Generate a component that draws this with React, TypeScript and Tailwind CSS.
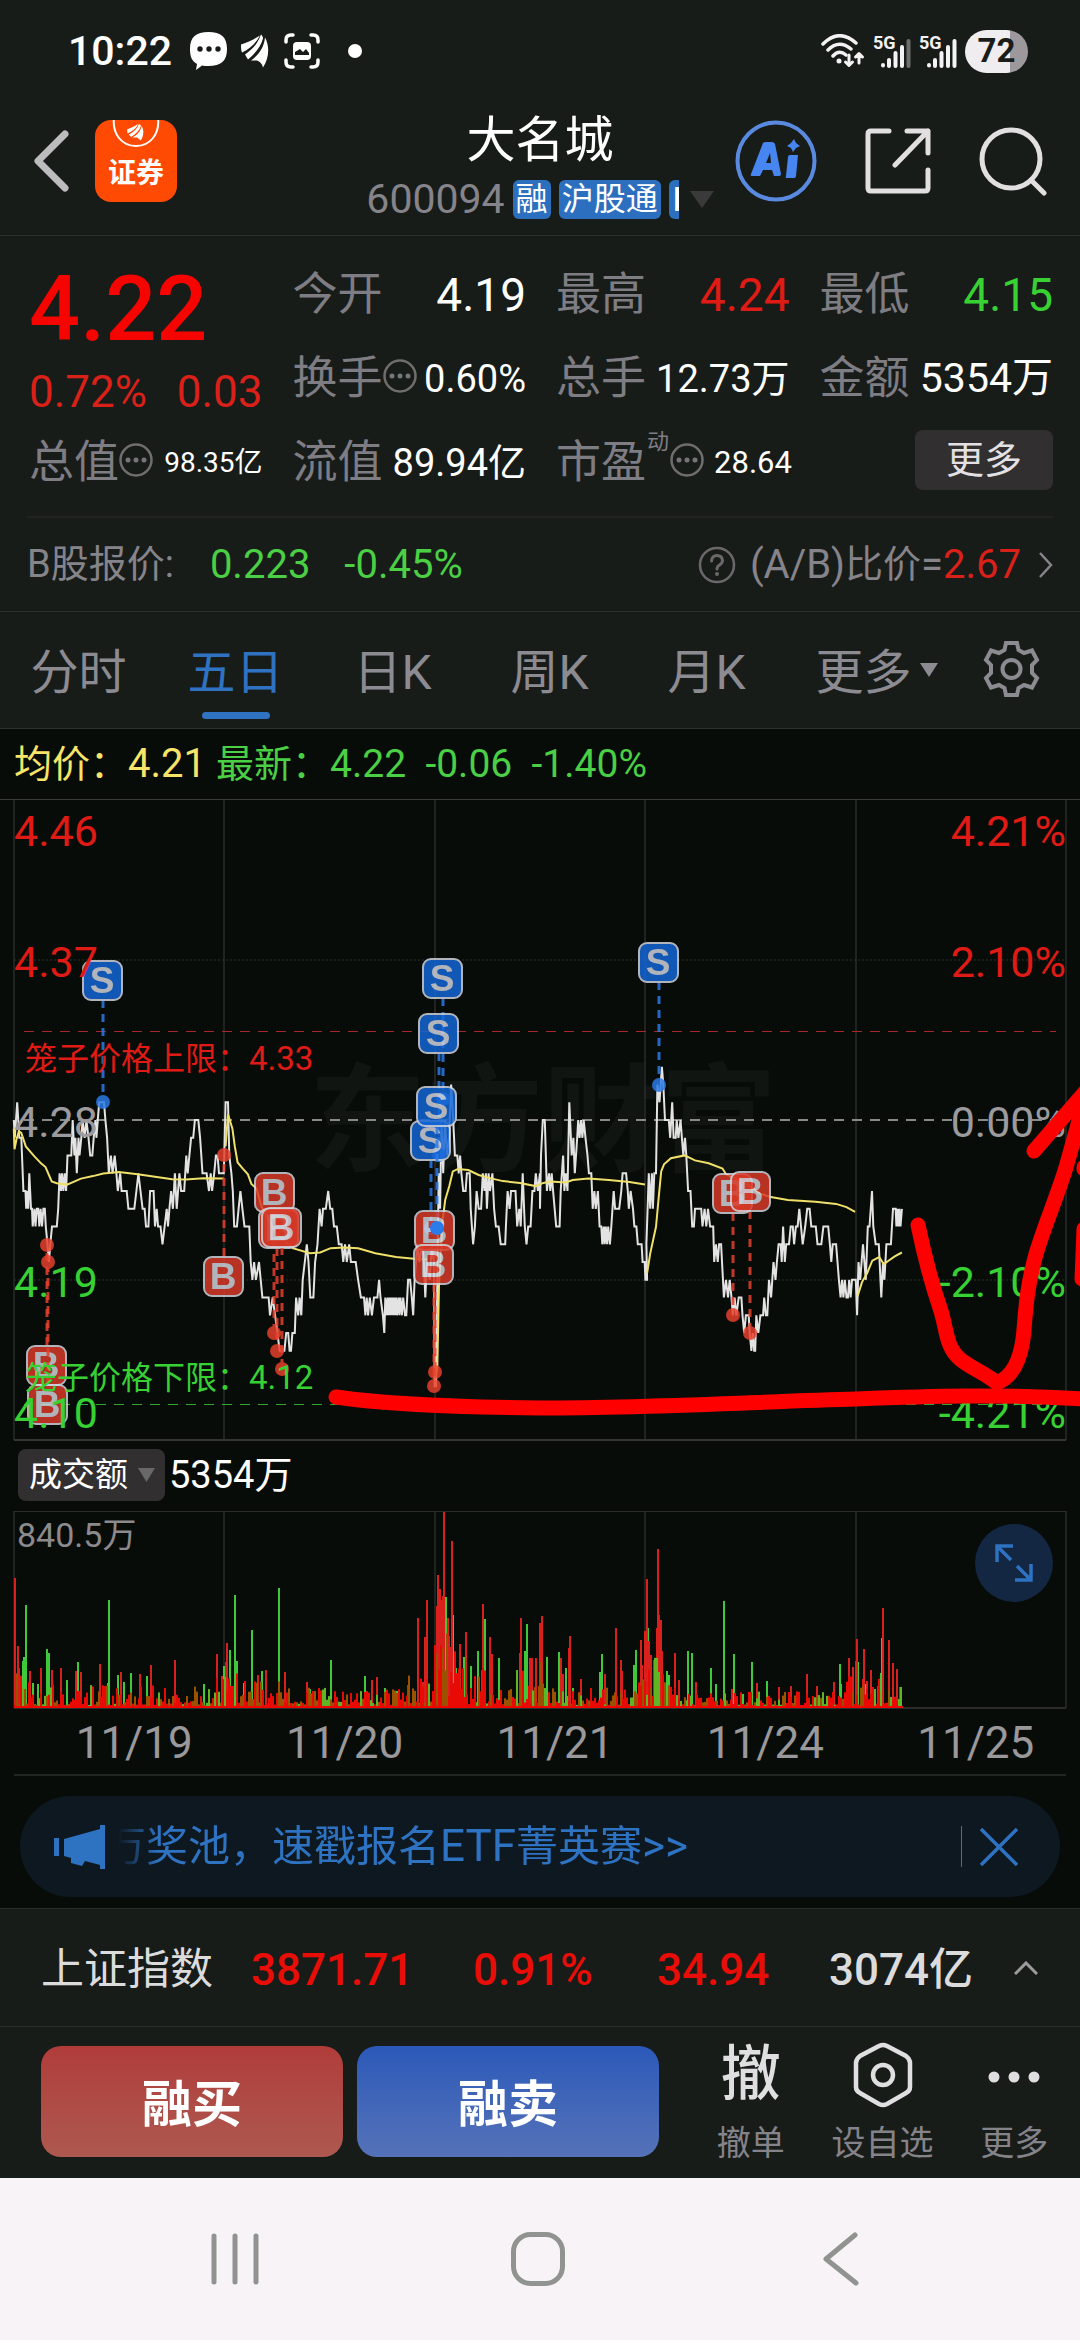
import type { ReactNode } from 'react'

type Side = 'S' | 'B'
type Point = [number, number]

const UP = '#e01a14'
const DOWN = '#37d134'

// ---- price chart -------------------------------------------------------

const CHART_LEFT = 14
const CHART_RIGHT = 1066
const SESSION_X = [14, 224, 435, 645, 856, 1066]
const TICKS_PER_PX = 2.904
const MID_Y = 321
const CENT_H = 17.75

const px = (start: number, t: number) => start + t / TICKS_PER_PX

function parse(src: string): Point[] {
  return src
    .trim()
    .split(/\s+/)
    .map((p) => p.split(',').map(Number) as Point)
}

// tick,cents above 4.00
function priceLine(start: number, src: string) {
  return parse(src)
    .map(([t, c]) => `${px(start, t).toFixed(1)},${(MID_Y + (28 - c) * CENT_H).toFixed(1)}`)
    .join(' ')
}

function avgLine(start: number, src: string) {
  return parse(src)
    .map(([t, v]) => `${px(start, t).toFixed(1)},${(101 + v / 2.8).toFixed(1)}`)
    .join(' ')
}

const PRICE_A = `40,28 43,27 50,29 56,27 62,27 68,24 74,24 76,23 79,24 82,23 85,25 90,23 93,23 95,22 100,23 103,22 107,23 111,23 114,22 118,23
122,22 126,23 130,23 133,22 138,21 142,20 146,21 151,22 165,22 169,23 173,25 177,24 180,25 184,24 188,25 192,24 196,26 207,26 211,28 216,26 219,27
223,25 228,27 231,26 236,27 240,28 246,27 251,28 257,27 262,26 268,26 272,27 277,28 280,27 284,28 288,29 302,29 306,28 311,27 316,25 322,26 327,25
333,26 338,25 342,24 349,25 353,24 368,24 373,23 390,23 396,24 402,25 408,24 414,23 420,23 424,22 431,22 436,24 446,24 450,22 455,23 459,22 466,22
472,21 478,22 484,23 488,22 492,23 497,24 502,23 508,25 513,23 521,25 526,24 535,24 541,26 545,25 550,26 555,27 561,27 566,28 576,28 581,27 588,25
600,25 607,24 612,25 616,24 622,25 627,26 632,26 636,25 650,25 655,29 662,29 666,26 672,25 676,24 680,22 688,22 693,23 698,24 704,23 710,22 724,22
728,20 733,19 738,20 743,19 752,20 757,19 762,18 780,18 784,17 792,18 799,17 806,16 812,15 826,15 831,16 837,16 841,15 845,15 849,16 856,16 860,18
866,17 870,18 875,17 879,19 885,20 891,21 896,20 901,18 910,18 915,20 922,21 928,23 934,22 938,23 946,23 953,24 959,23 965,23 970,22 978,22 984,21
992,21 997,20 1002,21 1007,20 1014,21 1019,20 1033,20 1040,19 1048,18 1057,18 1061,17 1065,18 1069,17 1074,18 1080,17 1086,18 1096,18 1101,19 1105,18
1112,17 1116,16 1119,18 1123,17 1126,18 1129,17 1132,18 1135,17 1138,18 1141,17 1144,18 1147,17 1150,18 1153,17 1157,18 1160,17 1163,18 1167,17
1171,18 1176,17 1180,17 1185,19 1191,19 1196,18 1200,17 1204,19 1212,21 1218,20 1226,21 1231,20 1235,18 1240,20 1248,19 1254,21 1260,20 1262,13
1266,13 1270,19 1274,25 1278,23 1282,28 1287,25 1292,28 1298,26 1304,27 1310,30 1316,28 1321,26 1328,26 1332,25 1336,26 1340,25 1345,24 1352,24
1356,25 1364,25 1367,23 1374,21 1379,22 1384,24 1390,23 1397,23 1402,25 1407,24 1411,25 1414,23 1419,25 1423,24 1430,25 1435,23 1440,22 1448,22
1454,21 1467,21 1469,22 1474,24 1480,23 1484,24 1497,24 1502,22 1508,23 1512,22 1518,25 1524,22 1529,21 1534,22 1541,22 1546,24 1552,24 1556,25
1562,24 1568,25`

const PRICE_B = `0,23 3,26 8,28 14,28 20,24 26,25 30,24 34,25 38,24 47,22 57,22 60,24 67,26 71,24 75,25 80,24 85,29 92,26 97,27 101,25 108,27 111,28
115,27 119,28 123,27 127,28 132,27 138,26 142,25 149,25 153,23 158,24 162,23 168,24 173,22 178,22 181,21 185,22 188,21 191,22 195,21 198,22 203,21
207,22 214,24 218,23 230,23 236,24 240,25 250,25 255,24 258,23 263,24 270,23 274,22 280,22 284,21 295,21 298,20 304,20 306,19 311,19 309,21 316,25
320,23 325,25 328,23 332,25 337,25 341,30 347,29 354,31 358,30 363,28 374,28 378,27 384,29 388,27 394,27 397,28 402,27 408,28 412,27 416,26 421,27
425,26 430,24 437,24 442,22 447,22 450,23 468,23 472,22 478,23 483,22 488,23 494,22 503,22 506,20 511,21 516,20 520,21 526,21 534,18 540,19 546,18
551,19 556,18 560,17 565,18 570,17 577,18 585,18 588,17 593,16 598,17 606,17 609,16 614,15 618,16 622,15 625,15 628,17 634,16 640,17 648,17 651,18
656,17 660,17 665,19 671,18 678,20 684,19 688,20 693,21 699,21 702,20 706,22 711,20 715,21 723,21 728,22 734,22 738,21 743,22 748,22 753,23 758,22
763,21 770,22 776,23 783,23 788,22 801,22 806,21 817,21 823,22 837,22 842,21 846,20 850,21 860,21 864,20 868,19 873,18 877,19 881,18 885,19 890,18
894,18 898,19 902,18 906,19 917,19 921,17 925,20 930,19 934,20 938,21 942,20 946,19 952,22 957,22 964,24 968,22 975,21 984,21 991,18 996,20 1000,19
1006,21 1019,21 1025,23 1033,23 1035,22 1038,23 1041,22 1044,23 1047,22 1051,23`

const AVERAGES = [
  avgLine(0, '40,640 42,698 48,670 55,648 62,652 75,690 100,718 120,738 132,748 150,788 165,793 195,797 235,780 270,773 300,766 345,762 400,768 450,775 500,782 540,783 590,779 650,780'),
  avgLine(0, '655,690 662,600 675,640 682,690 690,735 705,752 720,768 730,795 745,808 760,860 800,930 850,975 900,989 930,987 960,975 1000,973 1040,975 1090,989 1150,1000 1210,1005 1240,1006'),
  avgLine(0, '1263,1350 1270,1310 1275,1080 1285,900 1293,840 1305,800 1315,760 1330,753 1360,756 1390,770 1420,778 1460,787 1510,792 1555,801 1578,792 1598,788 1643,791 1663,784 1708,780 1768,784 1828,790 1873,797'),
  avgLine(540, '311,1045 320,990 337,915 345,830 352,760 360,740 380,723 420,715 450,729 490,737 530,752 540,768 590,790 640,822 670,832 720,840 800,845 860,851 890,860 915,873'),
  avgLine(540, '922,1110 935,1070 950,1045 965,1010 985,1000 992,1010 998,1020 1012,1010 1030,998 1051,987'),
]

// badge centre, then the traded point that it belongs to
const TRADES: { side: Side; x: number; y: number; dot: Point }[] = [
  { side: 'S', x: 102, y: 181, dot: [103, 303] },
  { side: 'B', x: 46, y: 566, dot: [47, 446] },
  { side: 'B', x: 47, y: 605, dot: [48, 463] },
  { side: 'B', x: 223, y: 477, dot: [224, 356] },
  { side: 'B', x: 274, y: 393, dot: [274, 534] },
  { side: 'B', x: 278, y: 429, dot: [277, 552] },
  { side: 'B', x: 281, y: 428, dot: [282, 570] },
  { side: 'S', x: 442, y: 179, dot: [443, 300] },
  { side: 'S', x: 438, y: 234, dot: [439, 356] },
  { side: 'S', x: 430, y: 341, dot: [431, 429] },
  { side: 'S', x: 436, y: 307, dot: [437, 429] },
  { side: 'B', x: 434, y: 431, dot: [435, 573] },
  { side: 'B', x: 433, y: 465, dot: [434, 587] },
  { side: 'S', x: 658, y: 163, dot: [659, 286] },
  { side: 'B', x: 732, y: 394, dot: [733, 516] },
  { side: 'B', x: 750, y: 392, dot: [750, 534] },
]

const LEFT_LABELS = [
  { y: 47, text: '4.46', color: UP },
  { y: 178, text: '4.37', color: UP },
  { y: 338, text: '4.28', color: '#9c9a9d' },
  { y: 498, text: '4.19', color: DOWN },
  { y: 629, text: '4.10', color: DOWN },
]

const RIGHT_LABELS = [
  { y: 47, text: '4.21%', color: UP },
  { y: 178, text: '2.10%', color: UP },
  { y: 338, text: '0.00%', color: '#9c9a9d' },
  { y: 498, text: '-2.10%', color: DOWN },
  { y: 629, text: '-4.21%', color: DOWN },
]

function Trade({ side, x, y, dot }: (typeof TRADES)[number]) {
  const main = side === 'S' ? '#2b7be8' : '#e8402c'
  const from = dot[1] > y ? y + 20 : y - 20
  return (
    <g opacity="0.84">
      <line x1={dot[0]} y1={from} x2={dot[0]} y2={dot[1]} stroke={main} strokeWidth="3" strokeDasharray="8 6" />
      <circle cx={dot[0]} cy={dot[1]} r="7" fill={main} />
      <rect x={x - 19} y={y - 19} width="39" height="39" rx="8" fill={side === 'S' ? '#1466d6' : '#d93a28'} stroke="#d3d5de" strokeWidth="2" />
      <text x={x} y={y + 13} textAnchor="middle" fontSize="37" fontWeight="700" fill="#d3d5de" fontFamily="Liberation Sans, Arial, sans-serif">
        {side}
      </text>
    </g>
  )
}

function PriceChart() {
  return (
    <svg viewBox="0 0 1080 642" className="block h-auto w-full" role="img" aria-label="五日走势">
      <text x="543" y="363" textAnchor="middle" fontSize="117" fontWeight="700" fill="#101511">
        东方财富
      </text>
      {SESSION_X.map((x) => (
        <line key={x} x1={x} y1="1" x2={x} y2="641" stroke="#393a3a" />
      ))}
      <line x1="0" y1="0.5" x2="1080" y2="0.5" stroke="#3a3a3a" />
      <line x1={CHART_LEFT} y1="641" x2={CHART_RIGHT} y2="641" stroke="#343434" strokeWidth="2" />
      {[161, 481].map((y) => (
        <line key={y} x1={CHART_LEFT} y1={y} x2={CHART_RIGHT} y2={y} stroke="#2c302d" strokeDasharray="2 2" />
      ))}
      <line x1="24" y1="232.5" x2="1056" y2="232.5" stroke="#a32a2a" strokeDasharray="10 8" />
      <line x1="24" y1="605.5" x2="1056" y2="605.5" stroke="#2fa930" strokeDasharray="10 8" />
      <line x1="24" y1="321" x2="1056" y2="321" stroke="#8a888b" strokeWidth="2" strokeDasharray="10 8" />

      <polyline points={priceLine(0, PRICE_A) + ' ' + priceLine(540, PRICE_B)} fill="none" stroke="#e4e3e4" strokeWidth="2" />
      {AVERAGES.map((points) => (
        <polyline key={points} points={points} fill="none" stroke="#efe069" strokeWidth="2" />
      ))}
      {TRADES.map((t) => (
        <Trade key={`${t.x}-${t.y}`} {...t} />
      ))}
      <circle cx="437" cy="429" r="7" fill="#2b7be8" />

      <g fontSize="43">
        {LEFT_LABELS.map((l) => (
          <text key={l.text} x="14" y={l.y} fill={l.color}>
            {l.text}
          </text>
        ))}
        {RIGHT_LABELS.map((l) => (
          <text key={l.text} x="1066" y={l.y} fill={l.color} textAnchor="end">
            {l.text}
          </text>
        ))}
      </g>
      <text x="25" y="271" fontSize="32" fill={UP}>
        笼子价格上限：<tspan fontSize="33">4.33</tspan>
      </text>
      <text x="25" y="590" fontSize="32" fill={DOWN}>
        笼子价格下限：<tspan fontSize="33">4.12</tspan>
      </text>

      {/* hand drawn marks */}
      <g fill="none" stroke="#ff0000" strokeWidth="15" strokeLinecap="round" strokeLinejoin="round">
        <path d="M336 598C370 603 440 608 540 609C660 609 770 602 856 600C930 597 1000 595 1085 600" />
        <path d="M918 426C925 460 930 480 941 512C947 532 946 548 960 560C972 570 984 573 997 584C1012 578 1020 562 1023 540C1026 515 1025 495 1036 455C1045 425 1060 390 1067 365C1074 340 1078 325 1085 300" />
        <path d="M1034 352L1086 292" />
        <path d="M1084 370V368" />
        <path d="M1084 430L1082 480" />
      </g>
    </svg>
  )
}

// ---- volume chart ------------------------------------------------------

const VOL_H = 197

// x,height of the tall bars
const VOL_UP = parse(`14,130 14,65 17,62 18,40 29,37 40,40 51,38 60,40 75,37 80,36 99,44 120,36 139,34 150,43 174,48 216,54 226,65 221,32
225,46 257,33 265,38 284,36 306,26 376,31 371,28 407,23 417,90 426,108 424,71 422,26 434,62 436,102 437,133 439,119 441,108 443,196 442,112 447,90
448,72 451,167 449,61 459,64 465,76 482,104 481,38 489,71 491,54 519,55 520,90 529,50 531,50 535,50 541,92 539,85 540,84 560,50 562,34 569,72 568,60
580,29 604,34 615,80 620,48 621,37 640,68 641,43 646,129 644,77 648,67 650,53 657,159 656,80 658,93 660,88 661,57 653,48 674,55 678,28 695,26 731,19
756,25 778,21 790,22 806,34 816,22 833,26 848,50 852,41 856,69 855,47 863,59 862,29 870,38 866,27 882,100 888,68 892,45 896,39 899,21 877,22`)
const VOL_DOWN = parse(`25,103 23,51 22,47 46,59 48,55 32,25 37,24 77,46 66,28 108,108 107,25 117,33 123,26 130,35 146,32 203,24 234,113 236,47 223,42 229,58
243,25 251,78 261,37 278,120 330,48 364,32 309,19 384,20 396,17 445,111 444,73 452,93 455,40 463,51 470,42 477,57 484,89 498,50 524,57 526,84 530,49 546,51
558,56 565,40 572,20 599,36 601,54 635,58 633,43 647,80 654,40 658,64 666,37 668,33 687,57 691,55 710,40 715,24 723,107 733,54 751,46 766,27 742,14
839,44 840,24 857,46 881,70 880,35 865,24 900,18 874,19`)

function envelope(x: number) {
  if (x < 26) return 40
  if (x < 60) return 26
  if (x < 215) return 20
  if (x < 245) return 38
  if (x < 290) return 24
  if (x < 405) return 18
  if (x < 432) return 32
  if (x < 460) return 74
  if (x < 495) return 38
  if (x < 515) return 18
  if (x < 550) return 46
  if (x < 625) return 18
  if (x < 645) return 26
  if (x < 664) return 50
  if (x < 680) return 24
  if (x < 845) return 14
  if (x < 884) return 32
  return 22
}

function minuteBars() {
  const bars: { x: number; h: number; color: string }[] = []
  let seed = 17
  const next = () => {
    seed = (seed * 16807) % 2147483647
    return seed / 2147483647
  }
  for (let x = 14; x < 902; x += 2) {
    const h = 3 + envelope(x) * Math.pow(next(), 1.4)
    const kind = next()
    bars.push({ x, h, color: kind < 0.58 ? '#e80a05' : kind < 0.84 ? '#9a5200' : '#5fb524' })
  }
  return bars
}

function VolumeChart() {
  return (
    <svg viewBox="0 0 1080 198" className="block h-auto w-full" role="img" aria-label="成交额">
      {SESSION_X.map((x) => (
        <line key={x} x1={x} y1="0" x2={x} y2={VOL_H} stroke="#393a3a" />
      ))}
      <line x1={CHART_LEFT} y1="0.5" x2={CHART_RIGHT} y2="0.5" stroke="#2b2b2b" />
      <line x1={CHART_LEFT} y1={VOL_H} x2={CHART_RIGHT} y2={VOL_H} stroke="#2b2b2b" strokeWidth="2" />
      {VOL_DOWN.map(([x, h], i) => (
        <rect key={i} x={x} y={VOL_H - h} width="2" height={h} fill="#3fc93a" />
      ))}
      {VOL_UP.map(([x, h], i) => (
        <rect key={i} x={x} y={VOL_H - h} width="2" height={h} fill="#d8211c" />
      ))}
      {minuteBars().map((b) => (
        <rect key={b.x} x={b.x} y={VOL_H - b.h} width="2" height={b.h} fill={b.color} />
      ))}
      <rect x="14" y={VOL_H - 2} width="889" height="2" fill="#f00500" />
      <text x="17" y="36" fontSize="34" fill="#8c8a8d">
        840.5万
      </text>
    </svg>
  )
}

// ---- small icons -------------------------------------------------------

function Leaf({ className }: { className: string }) {
  return (
    <svg viewBox="0 0 28 33" className={className} fill="currentColor" aria-hidden="true">
      <path d="M0 10C6 8 13 5 19 1C15 8 10 14 1 18C0 16 0 13 0 10Z" />
      <path d="M20 0C21 1 22 2 22 4C20 12 14 19 7 25L4 20C12 15 17 8 20 0Z" />
      <path d="M24 3C29 12 28 24 22 33C21 29 19 27 16 26C14 26 12 26 10 26C18 20 23 13 24 3Z" />
    </svg>
  )
}

function MoreDots() {
  return (
    <svg viewBox="0 0 34 34" className="mb-[6px] size-[34px] shrink-0" aria-hidden="true">
      <circle cx="17" cy="17" r="15.5" fill="none" stroke="#6f6d6e" strokeWidth="2.5" />
      <g fill="#77757a">
        <circle cx="9" cy="17" r="2.5" />
        <circle cx="17" cy="17" r="2.5" />
        <circle cx="25" cy="17" r="2.5" />
      </g>
    </svg>
  )
}

function Signal({ full }: { full: boolean }) {
  return (
    <svg viewBox="0 0 38 38" className="h-[38px] w-[38px]" aria-hidden="true">
      <text x="0" y="17" fontSize="18" fontWeight="700" fill="#f2f0f2">
        5G
      </text>
      <g stroke="#f4f2f4" strokeWidth="4" strokeLinecap="round">
        <path d="M10 33V33.5M16 28V34M22.500 21V34M29 15V34" />
        <path d="M35.500 9V34" stroke={full ? '#f4f2f4' : '#6d6f6d'} />
      </g>
    </svg>
  )
}

// ---- sections ----------------------------------------------------------

function StatusBar() {
  return (
    <div className="flex h-[102px] items-center pr-[52px] pl-[68px] text-white">
      <span className="text-[41px] leading-[48px] font-medium">10:22</span>
      <svg viewBox="0 0 37 38" className="ml-[18px] h-[38px] w-[37px]" aria-hidden="true">
        <path d="M18.500 0C31 0 37 5 37 17S31 34 18.500 34C16 34 14 34 12 33.500L6 38L7 32C2 29 0 25 0 17C0 5 6 0 18.500 0Z" fill="#fff" />
        <g fill="#181c19">
          <circle cx="10" cy="17" r="2.700" />
          <circle cx="19" cy="17" r="2.700" />
          <circle cx="28" cy="17" r="2.700" />
        </g>
      </svg>
      <Leaf className="ml-[14px] h-[34px] w-7" />
      <svg viewBox="0 0 36 36" className="ml-[15px] size-9" aria-hidden="true">
        <path d="M2 9V7Q2 2 7 2H9M27 2H29Q34 2 34 7V9M34 27V29Q34 34 29 34H27M9 34H7Q2 34 2 29V27" fill="none" stroke="#fff" strokeWidth="3.500" strokeLinecap="round" />
        <rect x="9" y="9" width="18" height="18" rx="4" fill="#fff" />
        <path d="M11 22V19L16 16L19 19L22 16L25 20V22Z" fill="#181c19" />
      </svg>
      <span className="ml-7 size-[14px] rounded-full bg-white" />

      <div className="ml-auto flex items-center gap-2">
        <svg viewBox="0 0 44 34" className="h-[34px] w-11" fill="none" stroke="#f4f2f4" strokeLinecap="round" aria-hidden="true">
          <path d="M2 10Q18 -6 35 9M7 16Q18 5 30 15M12 22Q18 15 25 21" strokeWidth="3.500" />
          <circle cx="18" cy="27" r="2.500" fill="#f4f2f4" stroke="none" />
          <path d="M28 21V31M24.500 28L28 31.500L31.500 28M38 29V20M34.500 23L38 19.500L41.500 23" strokeWidth="3" strokeLinejoin="round" />
        </svg>
        <Signal full={false} />
        <Signal full />
        <span className="flex h-[43px] w-[63px] items-center justify-center rounded-full bg-linear-to-r from-[#efedef] from-72% to-[#9c989c] to-72% text-[33px] font-bold text-[#1a1c1a]">
          72
        </span>
      </div>
    </div>
  )
}

function Tag({ children }: { children: ReactNode }) {
  return <span className="h-[39px] shrink-0 rounded-md bg-[#2d6fbf] px-[3px] text-[32px] leading-[39px] text-white">{children}</span>
}

function Header() {
  return (
    <header className="grid h-[134px] grid-cols-[1fr_auto_1fr] items-center border-b border-[#2e302f] pb-4">
      <div className="flex items-center gap-6 pl-[33px]">
        <button aria-label="返回">
          <svg viewBox="0 0 38 64" className="h-16 w-[38px]" fill="none" stroke="#bcbbbd" strokeWidth="7" strokeLinecap="round" strokeLinejoin="round">
            <path d="M32 5L5 32L32 59" />
          </svg>
        </button>
        <a href="#securities" aria-label="证券" className="flex h-[82px] w-[82px] flex-col items-center overflow-hidden rounded-2xl bg-[#ff4a04] text-white">
          <svg viewBox="0 0 48 36" className="h-9 w-12" aria-hidden="true">
            <path d="M2 -2C0 14 10 26 24 26S48 14 46 -2" fill="none" stroke="#fff" strokeWidth="2" />
            <g transform="translate(15 4) scale(0.600 0.500)" fill="#fff">
              <path d="M0 11C6 8 13 4 19 0C16 8 10 14 1 19Z" />
              <path d="M20 0C22 1 23 2 23 4C21 13 15 19 7 26L3 21C12 16 17 9 20 0Z" />
              <path d="M24 4C29 12 28 24 23 33L17 27H9C18 21 23 14 24 4Z" />
            </g>
          </svg>
          <span className="pt-[2px] text-[28px] leading-8 font-bold">证券</span>
        </a>
      </div>

      <div className="flex flex-col items-center pt-[8px]">
        <h1 className="text-[49px] leading-[60px] text-white">大名城</h1>
        <button className="mt-[9px] flex items-center gap-[8px]">
          <span className="text-[41px] leading-[39px] text-[#86848b]">600094</span>
          <Tag>融</Tag>
          <Tag>沪股通</Tag>
          {/* the tag list is clipped after this one */}
          <span className="h-[39px] w-[10px] overflow-hidden rounded-l-md bg-[#2d6fbf] pl-1 text-left text-[34px] leading-[39px] font-medium text-white">L</span>
          <svg viewBox="0 0 24 17" className="ml-[3px] h-[17px] w-6" fill="#3a3a3b" aria-hidden="true">
            <path d="M0 0H24L12 17Z" />
          </svg>
        </button>
      </div>

      <div className="flex items-center justify-end gap-12 pr-[33px]">
        <button aria-label="Ai">
          <svg viewBox="0 0 82 82" className="size-[82px]">
            <circle cx="41" cy="41" r="38.500" fill="none" stroke="#5a8ae0" strokeWidth="4" />
            <g fill="#4785f0">
              <path fillRule="evenodd" d="M28 23Q29 22 31 22H37Q39 22 40 24L46 54Q46 56 44 56H39L37 50H28L25 56H17Q15 56 16 54ZM31 43H36L35 33Z" />
              <path d="M55 35H63L61 56Q61 58 59 58H52Q50 58 51 56L53 37Q53 35 55 35Z" />
              <path d="M59 19L61 23L65 26L61 28L58 32L56 28L52 26L56 23Z" />
            </g>
          </svg>
        </button>
        <button aria-label="分享">
          <svg viewBox="0 0 66 68" className="h-[68px] w-[66px]" fill="none" stroke="#e2dfe1" strokeWidth="5" strokeLinecap="round" strokeLinejoin="round">
            <path d="M24 4H6Q3 4 3 7V61Q3 64 6 64H60Q63 64 63 61V43" />
            <path d="M42 4H63V26M63 4L30 38" />
          </svg>
        </button>
        <button aria-label="搜索">
          <svg viewBox="0 0 68 70" className="h-[70px] w-[68px]" fill="none" stroke="#e2dfe1" strokeWidth="5" strokeLinecap="round">
            <circle cx="32" cy="33" r="29" />
            <path d="M52 54L65 67" />
          </svg>
        </button>
      </div>
    </header>
  )
}

function Stat({ label, sup, more, children }: { label: string; sup?: string; more?: boolean; children: ReactNode }) {
  return (
    <div className="flex items-center whitespace-nowrap">
      <dt className="flex h-full items-center text-[45px] leading-[52px] text-[#7f7d84]">
        {label}
        {sup && <span className="mt-[10px] self-start px-px text-[22px] leading-[22px]">{sup}</span>}
        {more && <MoreDots />}
      </dt>
      {children}
    </div>
  )
}

function Quote() {
  return (
    <section>
      <dl className="grid auto-rows-[84px] grid-cols-4 gap-x-[30px] pt-[17px] pr-[27px] pb-[11px] pl-[29px]">
        <div className="row-span-2 flex flex-col pt-[11px]">
          <dd className="text-[90px] leading-[92px] font-medium text-[#f50400]">4.22</dd>
          <dd className="mt-[11px] flex justify-between text-[44px] leading-[50px] text-[#d92019]">
            <span>0.72%</span>
            <span>0.03</span>
          </dd>
        </div>
        <Stat label="今开">
          <dd className="ml-auto text-[46px] text-white">4.19</dd>
        </Stat>
        <Stat label="最高">
          <dd className="ml-auto text-[46px] text-[#e01a14]">4.24</dd>
        </Stat>
        <Stat label="最低">
          <dd className="ml-auto text-[46px] text-[#37d134]">4.15</dd>
        </Stat>
        <Stat label="换手" more>
          <dd className="ml-auto text-[38px] text-white">0.60%</dd>
        </Stat>
        <Stat label="总手">
          <dd className="ml-auto text-[38px] text-white">12.73万</dd>
        </Stat>
        <Stat label="金额">
          <dd className="ml-auto text-[41px] text-white">5354万</dd>
        </Stat>
        <Stat label="总值" more>
          <dd className="ml-auto text-[28px] text-white">98.35亿</dd>
        </Stat>
        <Stat label="流值">
          <dd className="ml-auto text-[38px] text-white">89.94亿</dd>
        </Stat>
        <Stat label="市盈" sup="动" more>
          <dd className="ml-[10px] text-[31px] text-white">28.64</dd>
        </Stat>
        <div className="flex items-start justify-end pt-[9px]">
          <button className="h-[60px] w-[138px] rounded-lg bg-[#322f31] text-[38px] leading-[60px] text-[#e3e1e3]">更多</button>
        </div>
      </dl>

      <div className="mx-[27px] border-t-2 border-[#212321]" />

      <div className="flex h-[93px] items-center px-[27px] text-[38px] text-[#86848b]">
        <span>B股报价:</span>
        <span className="ml-9 text-[40px] text-[#4bcf45]">0.223</span>
        <span className="ml-[34px] text-[40px] text-[#4bcf45]">-0.45%</span>
        <a href="#ab" className="ml-auto flex items-center text-[40px]">
          <svg viewBox="0 0 38 38" className="mr-[14px] size-[38px]" fill="none" stroke="#6a686a" strokeWidth="2.500" strokeLinecap="round" aria-hidden="true">
            <circle cx="19" cy="19" r="17" />
            <path d="M13.500 15Q14 9.500 19 9.500T24.500 14.500Q24.500 17 21.500 19Q19 20.500 19 23" strokeWidth="3" />
            <circle cx="19" cy="28" r="2" fill="#6a686a" stroke="none" />
          </svg>
          (A/B)<span className="text-[38px]">比价</span>=<span className="text-[#d92019]">2.67</span>
          <svg viewBox="0 0 14 26" className="ml-[18px] h-[26px] w-[14px]" fill="none" stroke="#86848b" strokeWidth="2.500" aria-hidden="true">
            <path d="M1 1L12 13L1 25" />
          </svg>
        </a>
      </div>
    </section>
  )
}

const TABS = ['分时', '五日', '日K', '周K', '月K']

function Tabs() {
  return (
    <nav className="grid h-[118px] grid-cols-[repeat(6,157fr)_138fr] border-y border-[#2e302f] text-[48px] text-[#8d8b92]">
      {TABS.map((tab) => (
        <button key={tab} className={tab === '五日' ? 'flex flex-col items-center pt-[33px] text-[#2f72c1]' : 'flex flex-col items-center pt-[33px]'}>
          <span className="leading-[56px]">{tab}</span>
          {tab === '五日' && <span className="mt-[11px] h-[7px] w-[68px] rounded-full bg-[#2f72c1]" />}
        </button>
      ))}
      <button className="flex items-start justify-center pt-[33px]">
        <span className="leading-[56px]">更多</span>
        <svg viewBox="0 0 18 14" className="mt-[18px] -mr-[26px] ml-2 h-[14px] w-[18px]" fill="currentColor" aria-hidden="true">
          <path d="M0 0H18L9 14Z" />
        </svg>
      </button>
      <button aria-label="设置" className="flex items-start justify-center pt-[28px]">
        <svg viewBox="0 0 57 58" className="h-[58px] w-[57px]" fill="none" stroke="#8d8b92" strokeWidth="4">
          <path d="M23 3H34L35.500 10L41 13L49 10.500L54 20L49 25V33L54 38L49 47.500L41 45L35.500 48L34 55H23L21.500 48L16 45L8 47.500L3 38L8 33V25L3 20L8 10.500L16 13L21.500 10Z" />
          <circle cx="28.500" cy="29" r="9" />
        </svg>
      </button>
    </nav>
  )
}

const DATES = ['11/19', '11/20', '11/21', '11/24', '11/25']

function Charts() {
  return (
    <section className="bg-[#070c08]">
      <p className="flex h-[70px] items-center pl-[14px] text-[38px] whitespace-pre">
        <span className="text-[#f8e468]">
          均价：<span className="text-[40px]">4.21</span>
        </span>
        <span className="ml-[10px] text-[#4bcf45]">
          最新：<span className="text-[39px]">4.22  -0.06  -1.40%</span>
        </span>
      </p>
      <PriceChart />
      <div className="flex h-[70px] items-center pb-[3px] pl-[18px]">
        <button className="flex h-[52px] items-center gap-[10px] rounded-lg bg-[#322f31] pr-[10px] pl-[11px] text-[33px] leading-[50px] text-white">
          成交额
          <svg viewBox="0 0 17 14" className="h-[14px] w-[17px]" fill="#676867" aria-hidden="true">
            <path d="M0 0H17L8.500 14Z" />
          </svg>
        </button>
        <span className="ml-1 pt-[2px] text-[38px] text-white">5354万</span>
      </div>
      <div className="relative">
        <VolumeChart />
        <button aria-label="全屏" className="absolute top-[13px] right-[27px] rounded-full bg-[#132743] p-5">
          <svg viewBox="0 0 38 38" className="size-[38px]" fill="none" stroke="#2e72c2" strokeWidth="3.500">
            <path d="M18 2H2V18M2 2L16 16M20 36H36V20M36 36L22 22" />
          </svg>
        </button>
      </div>
      <div className="mx-[14px] grid h-[67px] grid-cols-5 border-b-2 border-[#222622] pt-[3px] text-center text-[44px] leading-[62px] text-[#9a989b]">
        {DATES.map((d) => (
          <span key={d} className="pl-[30px]">
            {d}
          </span>
        ))}
      </div>

      <div className="px-5 pt-[20px] pb-[11px]">
        <div className="flex h-[101px] items-center rounded-full bg-[#0e1820] pr-[42px] pl-[34px] text-[#2e72c2]">
          <svg viewBox="0 0 51 44" className="h-11 w-[51px]" fill="currentColor" aria-hidden="true">
            <path d="M0 13H5V31H0ZM10 14L46 4V0H51V44H46V40L31 36L28 41L17 38V33L10 31Z" />
          </svg>
          <a
            href="#etf"
            className="-ml-px text-[42px] leading-[60px] whitespace-nowrap [mask-image:linear-gradient(to_right,transparent_14px,black_54px)]"
          >
            万奖池，速戳报名<span className="text-[44px]">ETF</span>菁英赛<span className="text-[44px]">&gt;&gt;</span>
          </a>
          <span className="ml-auto h-[41px] w-px bg-[#2e72c2]" />
          <button aria-label="关闭" className="ml-[18px]">
            <svg viewBox="0 0 38 38" className="size-[38px]" fill="none" stroke="#2e72c2" strokeWidth="3.500">
              <path d="M1 1L37 37M37 1L1 37" />
            </svg>
          </button>
        </div>
      </div>
    </section>
  )
}

function IndexRow() {
  return (
    <div className="grid h-[119px] grid-cols-[210fr_222fr_184fr_172fr_185fr_66fr] items-center border-y border-[#2a2e2b] pt-[4px] pl-[41px] text-[44px] font-medium whitespace-nowrap text-[#e80d07]">
      <span className="text-[43px] font-normal text-[#dcdcdd]">上证指数</span>
      <span>3871.71</span>
      <span>0.91%</span>
      <span>34.94</span>
      <span className="text-[#dcdcdd]">3074亿</span>
      <button aria-label="展开">
        <svg viewBox="0 0 24 14" className="mb-1 h-[14px] w-6" fill="none" stroke="#9c9b9d" strokeWidth="3">
          <path d="M1 13L12 2L23 13" />
        </svg>
      </button>
    </div>
  )
}

function Action({ label, children }: { label: string; children: ReactNode }) {
  return (
    <button className="flex flex-1 flex-col items-center">
      <span className="flex h-[70px] items-center text-[60px] leading-[74px] font-medium text-[#dfdee0]">{children}</span>
      <span className="mt-[11px] text-[34px] leading-[44px] text-[#85838a]">{label}</span>
    </button>
  )
}

function TradeBar() {
  return (
    <div className="flex h-[151px] items-start pt-[13px] pl-[41px]">
      <div className="flex flex-[618] gap-[14px] pt-[6px] text-[50px] font-bold text-white">
        <button className="h-[111px] flex-1 rounded-[20px] bg-linear-to-b from-[#b03c3a] to-[#ad5850] pt-2">融买</button>
        <button className="h-[111px] flex-1 rounded-[20px] bg-linear-to-b from-[#2b59b9] to-[#5572b8] pt-2">融卖</button>
      </div>
      <div className="ml-[26px] flex flex-[395]">
        <Action label="撤单">撤</Action>
        <Action label="设自选">
          <svg viewBox="0 0 60 66" className="h-[66px] w-[60px]" fill="none" stroke="#dfdee0" strokeWidth="4.500" aria-hidden="true">
            <path d="M26 4Q30 2 34 4L53 14Q57 17 57 21V45Q57 49 53 51L34 62Q30 64 26 62L7 51Q3 49 3 45V21Q3 17 7 14Z" />
            <circle cx="30" cy="33" r="10" />
          </svg>
        </Action>
        <Action label="更多">
          <svg viewBox="0 0 52 12" className="mt-1 h-3 w-[52px]" fill="#dfdee0" aria-hidden="true">
            <circle cx="6" cy="6" r="5.500" />
            <circle cx="26" cy="6" r="5.500" />
            <circle cx="46" cy="6" r="5.500" />
          </svg>
        </Action>
      </div>
    </div>
  )
}

function SystemNav() {
  return (
    <div className="flex h-[162px] items-start justify-between bg-[#f7f3f7] pt-[54px] pr-[221px] pl-[209px]">
      <button aria-label="最近任务">
        <svg viewBox="0 0 54 54" className="size-[54px]" stroke="#919391" strokeWidth="5" strokeLinecap="round">
          <path d="M5 4V50M26 4V50M47 4V50" />
        </svg>
      </button>
      <button aria-label="主页" className="mr-[10px]">
        <svg viewBox="0 0 54 54" className="size-[54px]" fill="none" stroke="#919391" strokeWidth="5">
          <rect x="2.500" y="2.500" width="49" height="49" rx="17" />
        </svg>
      </button>
      <button aria-label="返回桌面">
        <svg viewBox="0 0 36 54" className="h-[54px] w-9" fill="none" stroke="#919391" strokeWidth="5" strokeLinecap="round" strokeLinejoin="round">
          <path d="M32 3L3 27L33 51" />
        </svg>
      </button>
    </div>
  )
}

export default function App() {
  return (
    <main className="w-full overflow-hidden bg-[#181c19] font-['Roboto','Noto_Sans_CJK_SC',sans-serif]">
      <StatusBar />
      <Header />
      <Quote />
      <Tabs />
      <Charts />
      <IndexRow />
      <TradeBar />
      <SystemNav />
    </main>
  )
}
